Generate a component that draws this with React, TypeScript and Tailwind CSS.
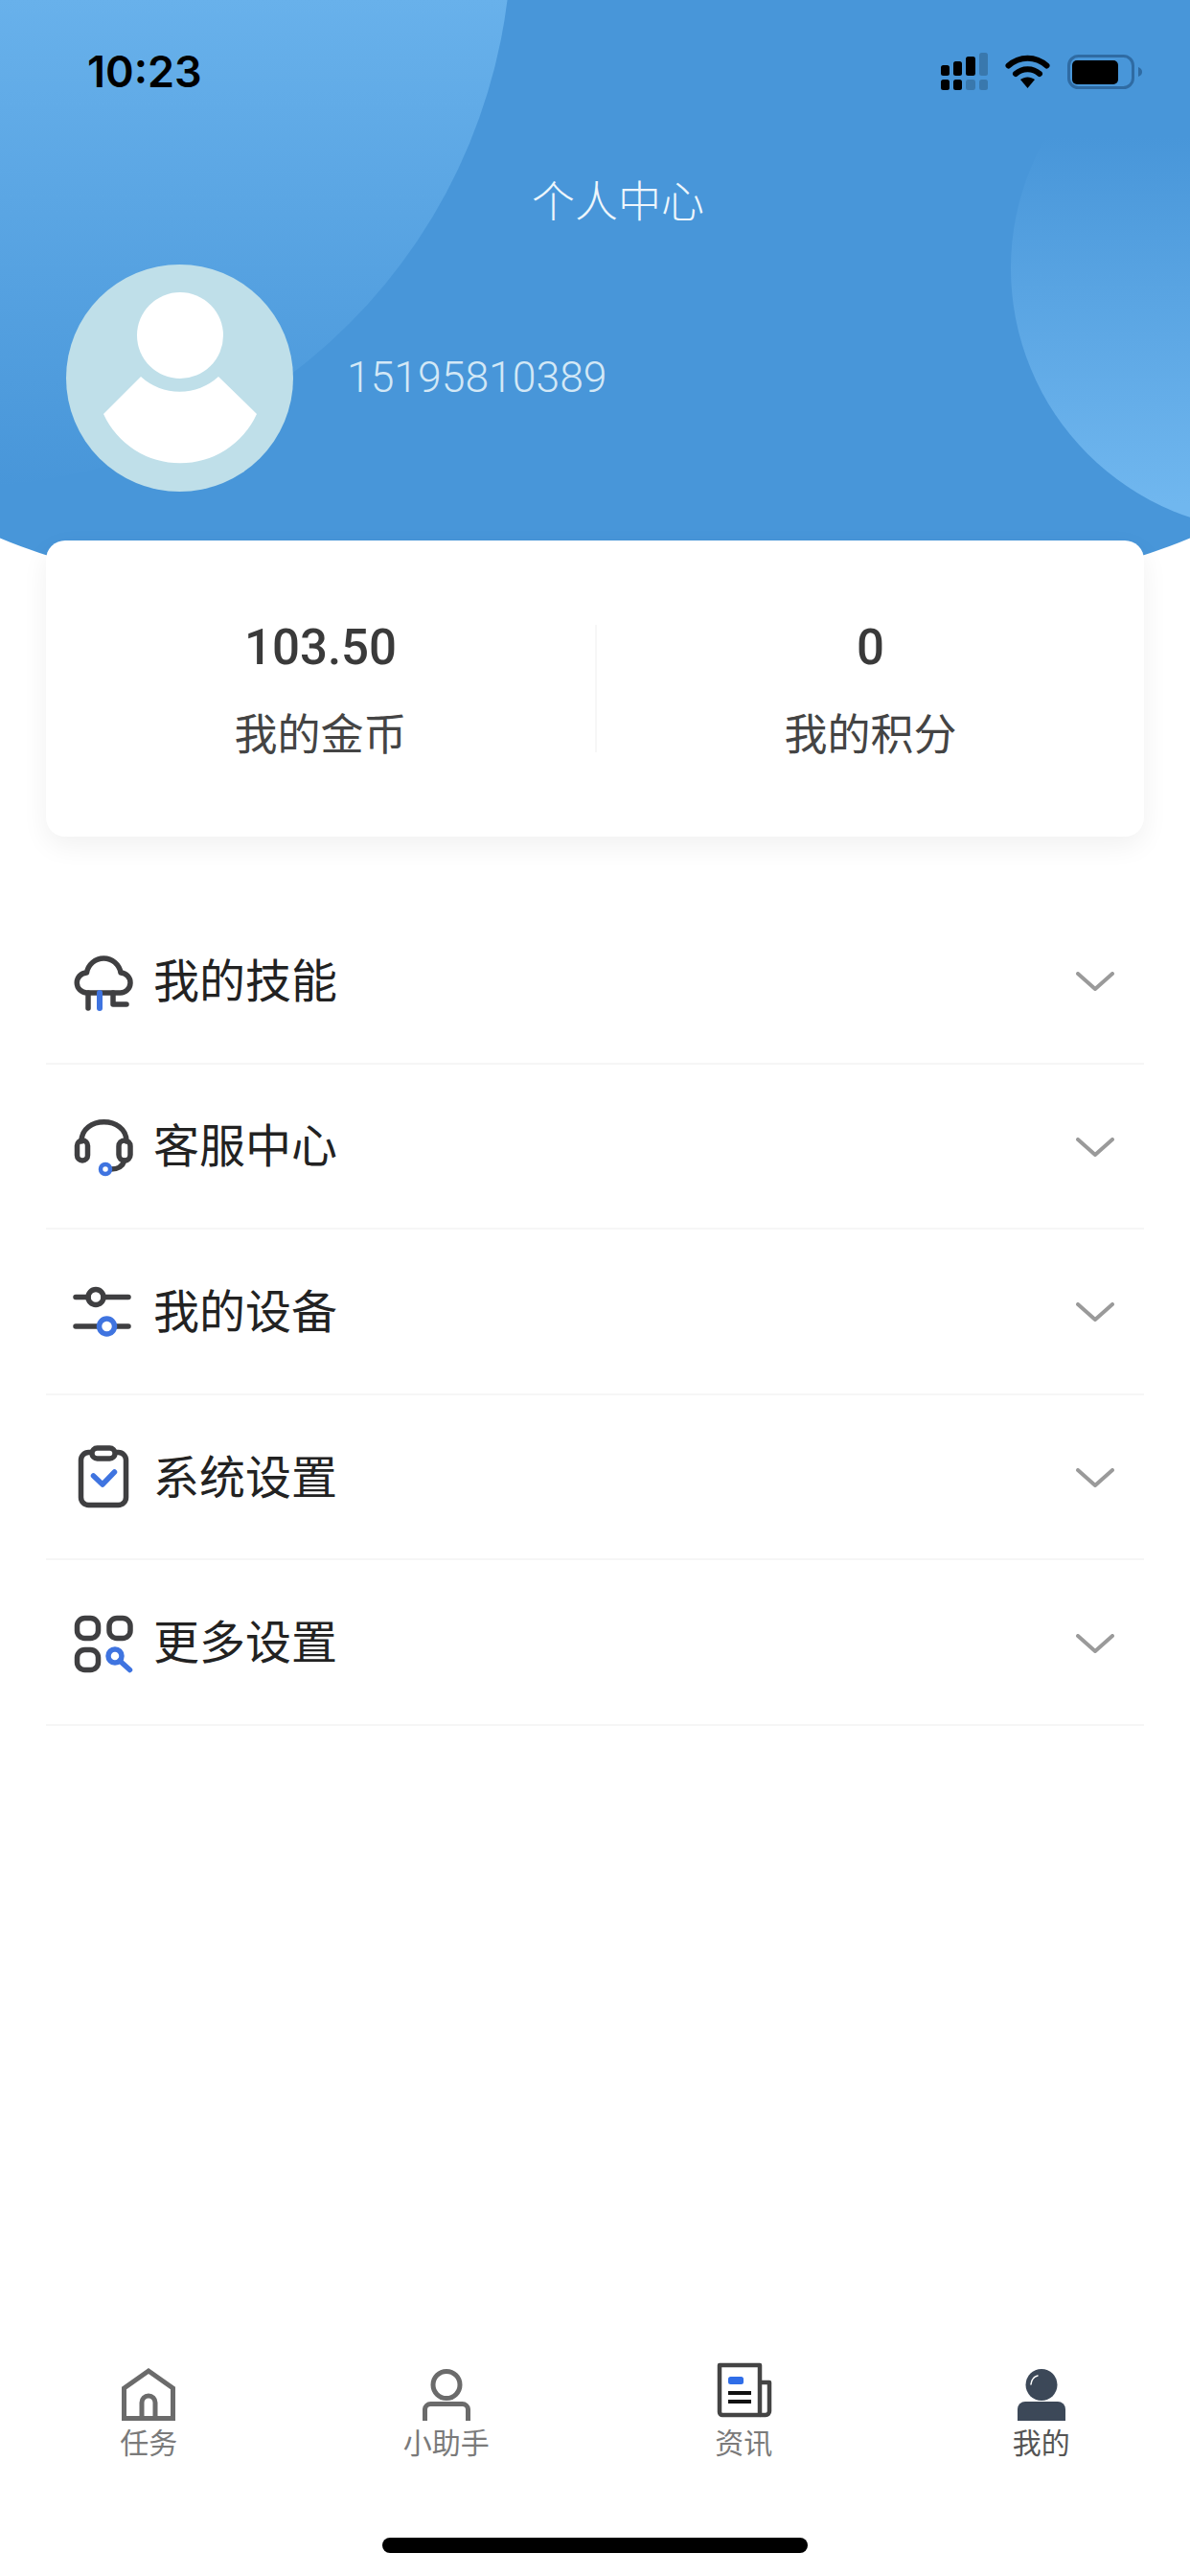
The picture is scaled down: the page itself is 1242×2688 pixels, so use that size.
import type { ReactNode } from "react";

const DARK = "#3f3f41";
const BLUE = "#3f74e0";

const menuItems: { label: string; icon: ReactNode }[] = [
  { label: "我的技能", icon: <CloudIcon /> },
  { label: "客服中心", icon: <HeadsetIcon /> },
  { label: "我的设备", icon: <SlidersIcon /> },
  { label: "系统设置", icon: <ClipboardIcon /> },
  { label: "更多设置", icon: <SearchGridIcon /> },
];

export default function App() {
  return (
    <div className="flex min-h-[2688px] w-[1242px] flex-col overflow-hidden bg-white font-['Roboto','Noto_Sans_CJK_SC',sans-serif]">
      <header className="relative -mx-[100px] h-[650px] shrink-0 overflow-hidden rounded-br-[721px_180px] rounded-bl-[721px_180px] bg-[#4896d9]">
        <div className="relative mx-[100px] w-[1242px]">
          <div className="absolute -top-[652px] -left-[626px] h-[1160px] w-[1160px] rounded-full bg-[linear-gradient(180deg,#68b1eb_56%,#4896d9_100%)]" />
          <div className="absolute top-[6px] left-[1055px] h-[548px] w-[548px] rounded-full bg-[linear-gradient(180deg,#4896d9_25%,#70b7ef_95%)]" />
          <div className="relative">
            <StatusBar />
            <h1 className="mt-[69px] text-center text-[45px] leading-[60px] font-light text-[#eef6fc] [text-indent:48px]">个人中心</h1>
            <div className="mt-[34px] flex items-center pl-[69px]">
              <Avatar />
              <span className="ml-[56px] font-['Roboto'] text-[44.5px] font-light text-[#d3e8f6]">15195810389</span>
            </div>
          </div>
        </div>
      </header>

      <section className="relative mx-[48px] -mt-[86px] grid h-[309px] shrink-0 grid-cols-2 rounded-[20px] bg-white shadow-[0_10px_28px_rgba(0,0,0,0.06)]">
        <Stat value="103.50" label="我的金币" />
        <Stat value="0" label="我的积分" bordered />
      </section>

      <nav className="mx-[48px] mt-[65px]">
        {menuItems.map((item) => (
          <div key={item.label} className="flex h-[172.6px] items-center border-b-2 border-[#f6f6f6] pr-[31px] pl-[22px]">
            {item.icon}
            <span className="ml-[18px] flex-1 pt-[3px] text-[48px] text-[#222]">{item.label}</span>
            <svg width="40" height="20" viewBox="0 0 40 20" fill="none" stroke="#9a9a9a" strokeWidth="4" strokeLinecap="round" strokeLinejoin="round" className="translate-y-[1px]">
              <path d="M2 2 L20 18 L38 2" />
            </svg>
          </div>
        ))}
      </nav>

      <footer className="mt-auto">
        <div className="grid grid-cols-4">
          <Tab label="任务"><HomeTabIcon /></Tab>
          <Tab label="小助手"><PersonTabIcon /></Tab>
          <Tab label="资讯"><NewsTabIcon /></Tab>
          <Tab label="我的" active><MeTabIcon /></Tab>
        </div>
        <div className="mx-auto mt-[76px] mb-[24px] h-[16px] w-[444px] rounded-full bg-black" />
      </footer>
    </div>
  );
}

function StatusBar() {
  return (
    <div className="flex h-[113px] items-end justify-between pr-[50px] pb-[16px] pl-[91px]">
      <span className="font-['Inter'] text-[45px] leading-[44px] font-semibold text-black">10:23</span>
      <div className="flex items-center gap-[18px] pb-[3px]">
        <svg width="49" height="39" viewBox="0 0 49 39" fill="#000">
          <rect x="0" y="13" width="9" height="11" rx="2.5" />
          <rect x="13" y="9" width="9" height="15" rx="2.5" />
          <rect x="26" y="4" width="10" height="20" rx="2.5" />
          <rect x="40" y="0" width="9" height="24" rx="2.5" opacity="0.2" />
          <rect x="0" y="28" width="9" height="11" rx="2.5" />
          <rect x="13" y="28" width="9" height="11" rx="2.5" />
          <rect x="26" y="28" width="10" height="11" rx="2.5" opacity="0.2" />
          <rect x="40" y="28" width="9" height="11" rx="2.5" opacity="0.2" />
        </svg>
        <svg width="47" height="36" viewBox="0 0 47 36" fill="none" stroke="#000" strokeWidth="6" strokeLinecap="round">
          <path d="M3.5 11.5 C15 1 32 1 43.5 11.5" />
          <path d="M11 20 C18 13.5 29 13.5 36 20" />
          <path d="M16 26 L23.5 35 L31 26 C26.5 22.5 20.5 22.5 16 26 Z" fill="#000" stroke="none" />
        </svg>
        <svg width="78" height="36" viewBox="0 0 78 36" fill="none">
          <rect x="1.5" y="1.5" width="67" height="33" rx="10" stroke="#2f6ba3" strokeWidth="3" />
          <rect x="5" y="6" width="48" height="25" rx="5" fill="#000" />
          <path d="M74 13 C77 14 78 16 78 18 C78 20 77 22 74 23 Z" fill="#2f6ba3" />
        </svg>
      </div>
    </div>
  );
}

function Avatar() {
  return (
    <svg width="237" height="237" viewBox="0 0 237 237" className="shrink-0">
      <circle cx="118.5" cy="118.5" r="118.5" fill="#bfdfe9" />
      <circle cx="119" cy="74" r="45" fill="#fff" />
      <path d="M39 156 L78 117 A60 60 0 0 0 159 117 L199 156 A88 88 0 0 1 39 156 Z" fill="#fff" />
    </svg>
  );
}

function Stat({ value, label, bordered }: { value: string; label: string; bordered?: boolean }) {
  return (
    <div className="flex items-center">
      {bordered ? <div className="h-[133px] w-[2px] bg-[#f7f7f7]" /> : null}
      <div className="flex-1 pt-[8px] text-center">
        <div className="text-[51px] leading-[60px] font-medium text-[#3a3a3a]">{value}</div>
        <div className="mt-[31px] text-[45px] leading-[62px] text-[#444]">{label}</div>
      </div>
    </div>
  );
}

function Tab({ label, active, children }: { label: string; active?: boolean; children: ReactNode }) {
  return (
    <div className="flex flex-col items-center">
      {children}
      <span className={active ? "text-[30px] leading-[44px] text-[#555]" : "text-[30px] leading-[44px] text-[#7a7a7a]"}>{label}</span>
    </div>
  );
}

function CloudIcon() {
  return (
    <svg width="72" height="72" viewBox="0 0 72 72" fill="none" stroke={DARK} strokeWidth="5.5" strokeLinecap="round" strokeLinejoin="round" className="shrink-0">
      <path d="M21 49 H55 A10.5 10.5 0 0 0 56 28 A18 18 0 0 0 20.5 28 A10.5 10.5 0 0 0 21 49 Z" />
      <path d="M22 49 V65" />
      <path d="M48 49 V61 H62" />
      <path d="M34 49 V65" stroke={BLUE} strokeWidth="6" />
    </svg>
  );
}

function HeadsetIcon() {
  return (
    <svg width="72" height="72" viewBox="0 0 72 72" fill="none" stroke={DARK} strokeWidth="5.5" strokeLinecap="round" strokeLinejoin="round" className="shrink-0">
      <path d="M15 31 C15 4 62 4 62 31" />
      <rect x="10.5" y="30" width="11" height="21" rx="5.5" />
      <rect x="54" y="30" width="12" height="21" rx="6" />
      <path d="M60 51 C58 57 53 60 46 60" />
      <circle cx="40" cy="60" r="5" stroke={BLUE} strokeWidth="4.5" />
    </svg>
  );
}

function SlidersIcon() {
  return (
    <svg width="72" height="72" viewBox="0 0 72 72" fill="none" stroke={DARK} strokeWidth="5.5" strokeLinecap="round" className="shrink-0">
      <path d="M9 21.5 H22 M38 21.5 H64" />
      <circle cx="30" cy="21.5" r="8" />
      <path d="M9 52 H33 M50 52 H64" />
      <circle cx="41.5" cy="52" r="8" stroke={BLUE} />
    </svg>
  );
}

function ClipboardIcon() {
  return (
    <svg width="72" height="72" viewBox="0 0 72 72" fill="none" stroke={DARK} strokeWidth="5.5" strokeLinecap="round" strokeLinejoin="round" className="shrink-0">
      <rect x="14.5" y="10.5" width="47" height="55" rx="8" />
      <rect x="26" y="6" width="24" height="11" rx="5.5" fill="#fff" />
      <path d="M27.5 35 L37 44 L49.5 31" stroke={BLUE} />
    </svg>
  );
}

function SearchGridIcon() {
  return (
    <svg width="72" height="72" viewBox="0 0 72 72" fill="none" stroke={DARK} strokeWidth="5.5" strokeLinecap="round" className="shrink-0">
      <rect x="10.5" y="10.5" width="22" height="21" rx="8" />
      <rect x="44" y="10.5" width="22" height="21" rx="8" />
      <rect x="10.5" y="43.5" width="22" height="21" rx="8" />
      <circle cx="50" cy="50" r="7" stroke={BLUE} />
      <path d="M55 55 L65.5 64.5" stroke={BLUE} />
    </svg>
  );
}

function HomeTabIcon() {
  return (
    <svg width="60" height="60" viewBox="0 0 60 60" fill="none" stroke="#6b6b6b" strokeWidth="5">
      <path d="M4.5 55.5 V24 L30 6 L55.5 24 V55.5 Z" />
      <path d="M23 55.5 V39 A7 7 0 0 1 37 39 V55.5" />
    </svg>
  );
}

function PersonTabIcon() {
  return (
    <svg width="60" height="60" viewBox="0 0 60 60" fill="none" stroke="#6b6b6b" strokeWidth="5">
      <circle cx="30" cy="20.5" r="14" />
      <path d="M7.5 58 V46 A6 6 0 0 1 13.5 40.5 H46.5 A6 6 0 0 1 52.5 46 V58" />
    </svg>
  );
}

function NewsTabIcon() {
  return (
    <svg width="60" height="60" viewBox="0 0 60 60" fill="none" className="translate-x-[2px] -translate-y-[3px]">
      <path d="M3 3 H45 V55 H6 A3 3 0 0 1 3 52 Z" stroke="#444" strokeWidth="4.5" strokeLinejoin="round" />
      <path d="M45 21 H55 V51 A4 4 0 0 1 51 55 H45" stroke="#444" strokeWidth="4.5" strokeLinejoin="round" />
      <rect x="12" y="15" width="16" height="8" rx="2.5" fill="#2f6de8" />
      <path d="M12 32 H36 M12 41 H36" stroke="#111" strokeWidth="4" />
    </svg>
  );
}

function MeTabIcon() {
  return (
    <svg width="60" height="60" viewBox="0 0 60 60">
      <circle cx="30" cy="20.5" r="16.5" fill="#3c4858" />
      <path d="M19 20 C19.5 15.5 22 12 26 11" fill="none" stroke="#fff" strokeWidth="1.5" strokeLinecap="round" />
      <path d="M5 58 V46 A8 8 0 0 1 13 38 H47 A8 8 0 0 1 55 46 V58 Z" fill="#3c4858" />
    </svg>
  );
}
